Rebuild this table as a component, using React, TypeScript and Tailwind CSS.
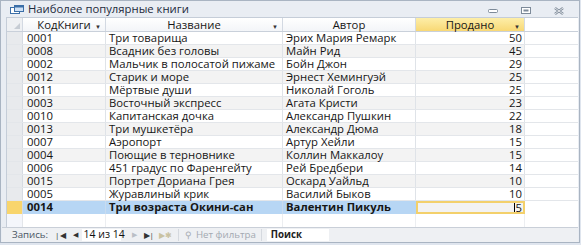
const rows: [string, string, string, number][] = [
  ["0001", "Три товарища", "Эрих Мария Ремарк", 50],
  ["0008", "Всадник без головы", "Майн Рид", 45],
  ["0002", "Мальчик в полосатой пижаме", "Бойн Джон", 29],
  ["0012", "Старик и море", "Эрнест Хемингуэй", 25],
  ["0011", "Мёртвые души", "Николай Гоголь", 25],
  ["0003", "Восточный экспресс", "Агата Кристи", 23],
  ["0010", "Капитанская дочка", "Александр Пушкин", 22],
  ["0013", "Три мушкетёра", "Александр Дюма", 18],
  ["0007", "Аэропорт", "Артур Хейли", 15],
  ["0004", "Поющие в терновнике", "Коллин Маккалоу", 15],
  ["0006", "451 градус по Фаренгейту", "Рей Бредбери", 14],
  ["0015", "Портрет Дориана Грея", "Оскард Уайльд", 10],
  ["0005", "Журавлиный крик", "Василий Быков", 10],
];

const cols = "grid grid-cols-[16px_83px_177px_133px_109px_1fr]";

function HeaderCell({ label, active }: { label: string; active?: boolean }) {
  return (
    <div
      className={
        "relative flex items-center justify-center border-r border-[#d3d9e2] " +
        (active ? "bg-gradient-to-b from-[#fdeea8] to-[#f8d874]" : "bg-gradient-to-b from-white to-[#f3f5f8]")
      }
    >
      <span>{label}</span>
      <span className="absolute right-[4px] top-[3px] text-[6px] text-[#333]">▼</span>
    </div>
  );
}

export default function App() {
  return (
    <div className="w-[581px] h-[245px] bg-[#dfe5ee] font-['Open_Sans',sans-serif] text-[11.3px] text-[#161616] overflow-hidden">
      <div className="w-[580px] h-[243px] border border-[#a9b4c2] bg-[#e9edf3] flex flex-col">
        {/* title bar */}
        <div className="h-[16px] flex items-center pl-[9px] pr-[15px] shrink-0">
          <svg width="14" height="9" viewBox="0 0 14 9" className="mr-[4px]">
            <rect x="0.5" y="2.5" width="9" height="6" fill="#fff" stroke="#3b6fa8" />
            <rect x="4.5" y="0.5" width="9" height="6" fill="#cfe1f5" stroke="#3b6fa8" />
            <rect x="5" y="1" width="8" height="1.5" fill="#3b6fa8" />
          </svg>
          <span className="text-[11.3px] leading-[14px] text-[#1e2b3c]">Наиболее популярные книги</span>
          <div className="ml-auto flex items-center gap-[23px] mt-[3px]">
            <svg width="10" height="4" viewBox="0 0 10 4">
              <rect x="0.5" y="0.5" width="9" height="3" rx="1" fill="#fff" stroke="#7d8a99" />
            </svg>
            <svg width="10" height="7" viewBox="0 0 10 7">
              <rect x="0.5" y="0.5" width="9" height="6" fill="#fff" stroke="#7d8a99" />
              <rect x="2.5" y="2.5" width="5" height="2" fill="#7d8a99" />
            </svg>
            <svg width="10" height="8" viewBox="0 0 10 8">
              <path d="M1 1 L9 7 M9 1 L1 7" stroke="#7d8a99" strokeWidth="2.4" />
              <path d="M1 1 L9 7 M9 1 L1 7" stroke="#fff" strokeWidth="0.8" />
            </svg>
          </div>
        </div>
        {/* grid */}
        <div className="ml-[5px] mr-[1px] bg-white border-l border-t border-[#c5cdd8] flex flex-col leading-[12px]">
          <div className={cols + " h-[14px] border-b border-[#c9d0da]"}>
            <div className="bg-[#eef0f3] border-r border-[#d3d9e2] flex items-end justify-end pr-[2px] pb-[2px]">
              <div className="w-0 h-0 border-l-[6px] border-l-transparent border-b-[6px] border-b-[#c6ccd4]" />
            </div>
            <HeaderCell label="КодКниги" />
            <HeaderCell label="Название" />
            <div className="flex items-center justify-center border-r border-[#d3d9e2] bg-gradient-to-b from-white to-[#f3f5f8]">
              Автор
            </div>
            <HeaderCell label="Продано" active />
            <div className="bg-white" />
          </div>
          {rows.map((r, i) => (
            <div
              key={r[0]}
              className={cols + " h-[13px] border-b border-[#e3e6ea] whitespace-nowrap " + (i % 2 ? "bg-[#f3f3f3]" : "bg-white")}
            >
              <div className="bg-[#e8eaed] border-r border-[#d6dbe2]" />
              <div className="pl-[4px] border-r border-[#dfe3e8]">{r[0]}</div>
              <div className="pl-[3px] border-r border-[#dfe3e8]">{r[1]}</div>
              <div className="pl-[3px] border-r border-[#dfe3e8]">{r[2]}</div>
              <div className="text-right pr-[2px] border-r border-[#dfe3e8]">{r[3]}</div>
              <div className="bg-white" />
            </div>
          ))}
          <div className={cols + " h-[13px] border-b border-[#e3e6ea] font-bold whitespace-nowrap"}>
            <div className="bg-[#f8d56d] border-r border-[#d6dbe2]" />
            <div className="pl-[4px] bg-[#b7d6f4] border-r border-[#c8dbef]">0014</div>
            <div className="pl-[3px] bg-[#b7d6f4] border-r border-[#c8dbef]">Три возраста Окини-сан</div>
            <div className="pl-[3px] bg-[#b7d6f4]">Валентин Пикуль</div>
            <div className="bg-[#f2f2f2] border-2 border-[#f3d06b] flex items-center justify-end pr-[1px]">
              <span className="w-[1px] h-[9px] bg-black mr-[1px]" />
              <span className="font-normal leading-[9px]">5</span>
            </div>
            <div className="bg-white" />
          </div>
          <div className={cols + " h-[13px]"}>
            <div className="bg-[#f4f6fb] border-r border-[#e3e6ea]" />
            <div className="border-r border-[#eceef1]" />
            <div className="border-r border-[#eceef1]" />
            <div className="border-r border-[#eceef1]" />
            <div className="border-r border-[#eceef1]" />
            <div />
          </div>
        </div>
        {/* nav bar */}
        <div className="ml-[1px] mr-[1px] h-[15px] bg-[#eef0f3] border-t border-[#c9cfd8] flex items-center text-[9.7px] text-[#4a5563] whitespace-nowrap shrink-0">
          <span className="ml-[10px]">Запись:</span>
          <span className="ml-[7px] text-[8px] text-[#333]">|◀</span>
          <span className="ml-[7px] text-[7px] text-[#333]">◀</span>
          <div className="ml-[4px] h-[12px] w-[39px] bg-white flex items-center pl-[2px] text-[10.5px] text-[#111]">14 из 14</div>
          <span className="ml-[11px] text-[7px] text-[#b9bec6]">▶</span>
          <span className="ml-[7px] text-[8px] text-[#333]">▶|</span>
          <span className="ml-[5px] text-[8px] text-[#c9c2a2]">▶✱</span>
          <div className="ml-[6px] h-[12px] pl-[6px] pr-[5px] flex items-center gap-[4px] border-l border-r border-[#d5d9df] text-[#a3a9b1]">
            <span className="text-[9px]">⚲</span>
            <span>Нет фильтра</span>
          </div>
          <div className="ml-[5px] h-[12px] w-[62px] bg-white pl-[4px] flex items-center font-bold text-[#222]">Поиск</div>
          <div className="flex-1" />
        </div>
      </div>
    </div>
  );
}
